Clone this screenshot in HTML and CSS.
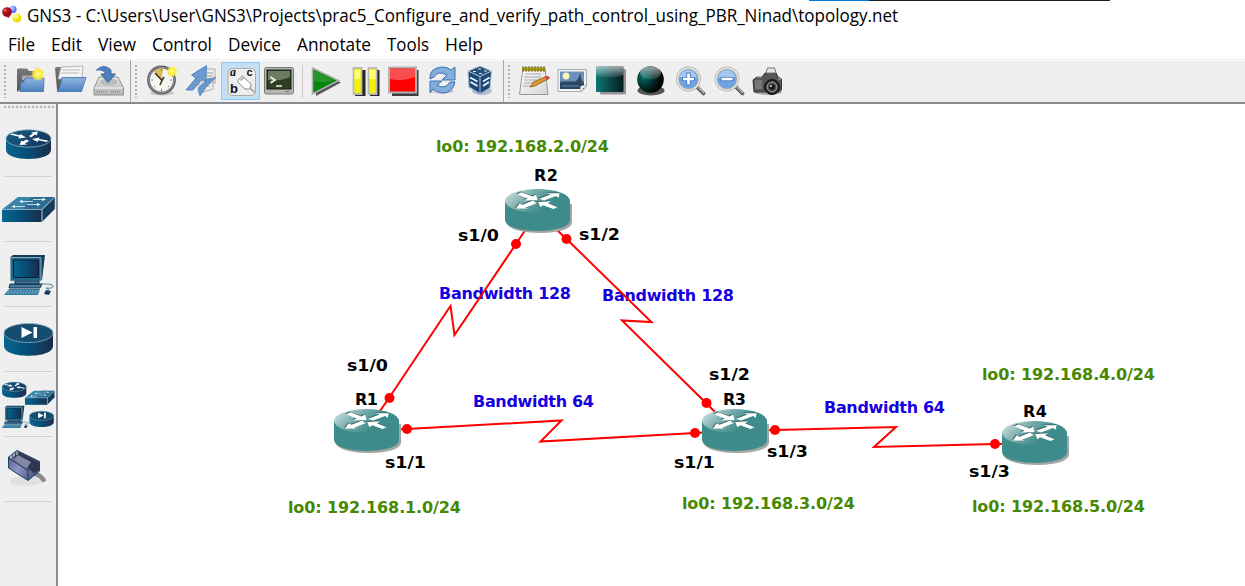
FILE: index.html
```html
<!DOCTYPE html>
<html lang="en">
<head>
<meta charset="utf-8">
<title>GNS3 - topology.net</title>
<link rel="stylesheet" href="styles.css">
</head>
<body>
<div class="window">
<header class="titlebar">
<svg class="title" width="910" height="30" viewBox="0 0 910 30">
<defs>
<radialGradient id="gr" cx=".3" cy=".3"><stop offset="0" stop-color="#e99"/><stop offset=".4" stop-color="#c11224"/><stop offset="1" stop-color="#9c0818"/></radialGradient>
<radialGradient id="gb" cx=".35" cy=".3"><stop offset="0" stop-color="#c4ccff"/><stop offset="1" stop-color="#6a78ee"/></radialGradient>
<radialGradient id="gy" cx=".35" cy=".3"><stop offset="0" stop-color="#ffffb0"/><stop offset="1" stop-color="#ecdf00"/></radialGradient>
<radialGradient id="star"><stop offset="0" stop-color="#fffdb0"/><stop offset=".45" stop-color="#fff23a"/><stop offset=".75" stop-color="#fbe94a" stop-opacity=".75"/><stop offset="1" stop-color="#fbe94a" stop-opacity="0"/></radialGradient>
<linearGradient id="blue" x2="0" y2="1"><stop offset="0" stop-color="#8eb5e0"/><stop offset="1" stop-color="#4d82be"/></linearGradient>
<linearGradient id="grey" x2="0" y2="1"><stop offset="0" stop-color="#777"/><stop offset="1" stop-color="#565656"/></linearGradient>
<linearGradient id="paper" x2="1" y2="1"><stop offset="0" stop-color="#fff"/><stop offset="1" stop-color="#d5d5d5"/></linearGradient>
<linearGradient id="drive" x2="0" y2="1"><stop offset="0" stop-color="#e6e6e6"/><stop offset="1" stop-color="#b4b4b4"/></linearGradient>
<linearGradient id="cisco"><stop offset="0" stop-color="#07658e"/><stop offset=".45" stop-color="#065079"/><stop offset="1" stop-color="#1c2c4e"/></linearGradient>
<linearGradient id="ciscotop" x2="1" y2=".3"><stop offset="0" stop-color="#145d85"/><stop offset="1" stop-color="#14395e"/></linearGradient>
<linearGradient id="nodeTop" x1="0" y1=".5" x2=".6" y2=".75"><stop offset="0" stop-color="#b2cfcf"/><stop offset=".45" stop-color="#72a9a9"/><stop offset="1" stop-color="#3d8c8b"/></linearGradient>
</defs>
<circle cx="13" cy="9.500" r="3.700" fill="url(#gb)"/><circle cx="7" cy="12" r="4.800" fill="url(#gr)"/><path d="M5 16 9 18 10 15Z" fill="#b01020"/><circle cx="17" cy="18" r="4.500" fill="url(#gy)"/>
<text x="27" y="22" textLength="871" lengthAdjust="spacingAndGlyphs">GNS3 - C:\Users\User\GNS3\Projects\prac5_Configure_and_verify_path_control_using_PBR_Ninad\topology.net</text>
</svg>
<div class="topstrip"></div>
</header>
<nav class="menu">
<svg width="43" height="30"><text x="8" y="21" textLength="27" lengthAdjust="spacingAndGlyphs">File</text></svg>
<svg width="47" height="30"><text x="8" y="21" textLength="31" lengthAdjust="spacingAndGlyphs">Edit</text></svg>
<svg width="54" height="30"><text x="8" y="21" textLength="38" lengthAdjust="spacingAndGlyphs">View</text></svg>
<svg width="76" height="30"><text x="8" y="21" textLength="60" lengthAdjust="spacingAndGlyphs">Control</text></svg>
<svg width="69" height="30"><text x="8" y="21" textLength="53" lengthAdjust="spacingAndGlyphs">Device</text></svg>
<svg width="90" height="30"><text x="8" y="21" textLength="74" lengthAdjust="spacingAndGlyphs">Annotate</text></svg>
<svg width="58" height="30"><text x="8" y="21" textLength="42" lengthAdjust="spacingAndGlyphs">Tools</text></svg>
<svg width="60" height="30"><text x="8" y="21" textLength="38" lengthAdjust="spacingAndGlyphs">Help</text></svg>
</nav>
<div class="toolbar">
<div class="group first">
<svg viewBox="12 62 39 38"><path d="M17 70q0-1.500 1.500-1.500H27l2 2.500H41.500V90H20L17 92Z" fill="url(#grey)"/><path d="M22 75.500H41V80H22Z" fill="#ababab"/><path d="M24 80 26 78H44L43.500 91.500H20L21 82H24Z" fill="url(#blue)" stroke="#3c6fae" stroke-width=".8"/><circle cx="38" cy="74" r="7" fill="url(#star)"/></svg>
<svg viewBox="51 62 39 38"><path d="M55 68.500q0-1.500 2-1.500H82V90H57Z" fill="url(#grey)"/><path d="M61 67 83 66 82 79H58Z" fill="#f4f4f4" stroke="#999" stroke-width=".7"/><path d="M62 70H80M61 73H79" stroke="#bbb"/><path d="M62 77.500H86L81.500 91.500H57Q60 88 62 77.500Z" fill="url(#blue)" stroke="#3c6fae" stroke-width=".8"/></svg>
<svg viewBox="90 62 39 38"><path d="M99 77H118L123.500 88V95H94V88Z" fill="url(#drive)" stroke="#909090"/><ellipse cx="109" cy="82" rx="9" ry="3.500" fill="#bbb"/><path d="M94.500 88H123" stroke="#f9f9f9"/><path d="M97 91.500H107M111 91.500H120" stroke="#8d8d8d" stroke-width="1.600" stroke-dasharray="1 1"/><path d="M96.500 70Q104 63 111 70V74H115.500L108 82.500 101 74H105.500Q104 69 96.500 70Z" fill="#4f82bd" stroke="#2f609c" stroke-width=".9"/></svg>
</div>
<div class="group second">
<svg viewBox="143 62 39 38"><ellipse cx="162" cy="93" rx="12" ry="2.500" fill="#c6c6c6"/><circle cx="161.500" cy="80" r="13" fill="#f5f5f0" stroke="#5d5c66" stroke-width="2.800"/><circle cx="161.500" cy="80" r="12.800" fill="none" stroke="#aaa8b3" stroke-width=".8"/><path d="M161.500 80 154 71A11.500 11.500 0 0 1 163 68.500Z" fill="#d8bd58"/><path d="M155 73 162 80.500 160 85M162 80 164 77" fill="none" stroke="#41351c" stroke-width="1.600"/><path d="M161.500 69V71M161.500 89V91M151 80H153M170 80H172M169 73l-1 1M154 87l1-1M169 87l-1-1" stroke="#777"/><circle cx="172" cy="71.500" r="5.800" fill="url(#star)"/></svg>
<svg viewBox="182 62 39 38"><g fill="#eee" stroke="#999" stroke-width=".8"><path d="M197 71H208V85H197Z"/><path d="M204 69H215V83H204Z"/><path d="M202 79H213V89L203 92Z"/></g><path d="M207 73H213M207 76H213M207 79H212M204 83H211M204 86H210" stroke="#999"/><path d="M198 88 208 79 216 77.500 207 86 200 96 198.500 92Z" fill="#6a97c8" stroke="#4779b1" stroke-width=".6"/><path d="M186 90 196 78 191.500 75 206.500 65.500 206 82 202 79.500 193 90Z" fill="#6c9ace" stroke="#3f76b7" stroke-width=".8"/></svg>
<svg class="active" viewBox="221 62 39 38"><rect x="228" y="68.500" width="27.500" height="27" rx="4.500" fill="#ededed" stroke="#aaa"/><g class="glyph"><text x="230" y="76" class="italic">a</text><text x="246.500" y="76">c</text><text x="230" y="93" class="bee">b</text></g><path d="M239 79 242.500 76 251 84V87L248.500 89H245L237.500 82Z" fill="#fff" stroke="#888"/><path d="M240.500 80.500 244 77.500M249.500 88 255 92.500" stroke="#aaa" stroke-width="1.700"/></svg>
<svg viewBox="260 62 39 38"><rect x="264.500" y="67.500" width="29" height="26.500" rx="2" fill="#b5b7b1" stroke="#777971"/><rect x="267" y="70" width="24" height="19" fill="#2e3d23" stroke="#171e12"/><path d="M268 71H290V77Q278 82 268 80Z" fill="#6b7b5e"/><path d="M270.500 77 275 80 270.500 83M276 86H282" fill="none" stroke="#edf4e8" stroke-width="1.700"/><path d="M286 91.500H289" stroke="#6b7268"/></svg>
<i class="sep"></i>
<svg viewBox="306 62 39 38"><path d="M316 71 341 82.500 316 96Z" fill="#555"/><path d="M312.500 68 338.500 80.500 312.500 94Z" fill="#07840c" stroke="#adb1ae" stroke-width="1.600"/><path d="M314 70.500 334 80Q323 84 314 81Z" fill="#45a145" opacity=".55"/></svg>
<svg viewBox="345 62 39 38"><path d="M355 70H365.500V96H355ZM370 70H379.500V96H370Z" fill="#262626"/><g fill="#f4f400" stroke="#bababa" stroke-width="1.800"><path d="M353.500 68H361.500V94H353.500ZM368.500 68H376.500V94H368.500Z"/></g><path d="M354.500 70H360.500V79H354.500ZM369.500 70H375.500V79H369.500Z" fill="#ffff72"/></svg>
<svg viewBox="384 62 39 38"><path d="M392 70H418.500V96H392Z" fill="#3e3e3e"/><rect x="389" y="67.500" width="27" height="25" fill="#ff0000" stroke="#b2b2b2" stroke-width="2"/><path d="M390 69H415V77Q403 82 390 79Z" fill="#fa4e4e"/></svg>
<svg viewBox="423 62 39 38"><ellipse cx="442" cy="91" rx="12" ry="3" fill="#d0d0d0"/><path d="M430 79Q429 68 442 67Q448 67 451 70L455 67V80H442L447 75Q438 70 434 77Z" fill="#82addc" stroke="#3b71b1"/><path d="M455 82Q453 93 442 93Q436 92 433 89L430 93V81H442L437 85Q445 90 450 82Z" fill="#82addc" stroke="#3b71b1"/></svg>
<svg viewBox="462 62 39 38"><ellipse cx="482" cy="91" rx="10" ry="4" fill="#b6bad2"/><path d="M468 71 480 66 491.500 71 490 88 480 94 469 87Z" fill="#1d4674"/><path d="M468 71 480 66 491.500 71 480 76.500Z" fill="#274d77" stroke="#c6d8e8" stroke-width=".9"/><path d="M480 76.500V94M468 71 469 87 480 94 490 88 491.500 71" fill="none" stroke="#9fbcd6" stroke-width="1.100"/><path d="M470 77.500 477.500 81.500M470.500 82 477.500 86M483 81.500 489.500 77.500M483 86 489 82" stroke="#e9f2fa" stroke-width="1.900"/><path d="M473 71.500H476M478 69H481M479 73.500H482M484 71H487" stroke="#dbe7f1" stroke-width="1.100"/></svg>
</div>
<div class="group third">
<svg viewBox="514 62 39 38"><path d="M523 68H545L548 94.500H519.500Z" fill="url(#paper)" stroke="#999"/><path d="M522 67.500H545V71H522Z" fill="#b8a51b"/><path d="M523 66V72M526 66V72M529 66V72M532 66V72M535 66V72M538 66V72M541 66V72M544 66V72" stroke="#665b14" stroke-width=".9"/><path d="M525 74H541M524 77H541M524 80H537M524 83H534M523 86H530" stroke="#aaa"/><path d="M530 87 533.500 82 546 76.500 548 79 535 86Z" fill="#d99a35" stroke="#89551b" stroke-width=".8"/><path d="M545 77 548 76 550 78 547 80Z" fill="#e03333"/></svg>
<svg viewBox="553 62 39 38"><path d="M558 69.500H586.500V86L582 91.500H558Z" fill="#f2f2f2" stroke="#ababab"/><path d="M560 71.500H584V85L580 89H560Z" fill="#6a90be"/><path d="M560 81H584V89H560Z" fill="#274769"/><path d="M560 82Q569 80 584 82M562 86H579" stroke="#6b8098" fill="none"/><circle cx="566" cy="76" r="3.500" fill="#f8f7b5"/><path d="M575 82Q579 79 580 73L582 82Z" fill="#34445c"/><path d="M580 91.500 581 86 586.500 85Z" fill="#fff" stroke="#aaa" stroke-width=".7"/></svg>
<svg viewBox="592 62 39 38"><defs><linearGradient id="teal"><stop offset="0" stop-color="#0b7772"/><stop offset="1" stop-color="#071a1d"/></linearGradient><radialGradient id="ball" cx=".25" cy=".4" r=".7"><stop offset="0" stop-color="#087069"/><stop offset=".55" stop-color="#022c29"/><stop offset="1" stop-color="#000"/></radialGradient><linearGradient id="gloss" x2="0" y2="1"><stop offset="0" stop-color="#fff" stop-opacity=".6"/><stop offset="1" stop-color="#fff" stop-opacity=".08"/></linearGradient></defs><rect x="600" y="69" width="26" height="25.500" rx="1.500" fill="#939393"/><rect x="596" y="66" width="27.500" height="26" rx="1" fill="url(#teal)"/><path d="M596 66H623.500V75Q609 80 596 75Z" fill="url(#gloss)"/></svg>
<svg viewBox="631 62 39 38"><ellipse cx="651" cy="90.500" rx="13.500" ry="5" fill="#555"/><circle cx="650.500" cy="79.500" r="13.300" fill="url(#ball)"/><ellipse cx="650.500" cy="73" rx="10.500" ry="6.500" fill="url(#gloss)"/></svg>
<svg viewBox="670 62 39 38"><path d="M697 87 703.500 93.500" stroke="#626262" stroke-width="3.800" stroke-linecap="round"/><path d="M698 87 704 93" stroke="#bbb" stroke-width="1.300"/><circle cx="688.500" cy="79" r="11" fill="#6fa3e2" stroke="#aaa" stroke-width="2.800"/><circle cx="688.500" cy="79" r="11" fill="none" stroke="#e7e7df" stroke-width="1.500"/><path d="M679.500 77A9 9 0 0 1 697 77Q688 81 679.500 77" fill="#a7c8ee"/><path d="M682 79H695M688.500 72.500V85.500" stroke="#437abd" stroke-width="4.200"/><path d="M683 79H694M688.500 73.500V84.500" stroke="#fff" stroke-width="2.600"/></svg>
<svg viewBox="709 62 39 38"><path d="M736 87 742.500 93.500" stroke="#626262" stroke-width="3.800" stroke-linecap="round"/><path d="M737 87 743 93" stroke="#bbb" stroke-width="1.300"/><circle cx="727" cy="79" r="11" fill="#6fa3e2" stroke="#aaa" stroke-width="2.800"/><circle cx="727" cy="79" r="11" fill="none" stroke="#e7e7df" stroke-width="1.500"/><path d="M718 77A9 9 0 0 1 735.500 77Q727 81 718 77" fill="#a7c8ee"/><path d="M720.500 79H733.500" stroke="#437abd" stroke-width="4.200"/><path d="M721.500 79H732.500" stroke="#fff" stroke-width="2.600"/></svg>
<svg viewBox="748 62 39 38"><ellipse cx="768" cy="92" rx="14" ry="3" fill="#aaa"/><path d="M753 80 757 77H762L765 73H776L778 77 781.500 79V90L778 92H754Z" fill="#555754" stroke="#333"/><path d="M766 73 767.500 68H774.500L776 73Z" fill="#e5e5e5" stroke="#777"/><path d="M755 80H762V89H755Z" fill="#777974"/><path d="M757 77H762M778 79H781" stroke="#bbb"/><circle cx="772" cy="87" r="7.500" fill="#242525" stroke="#111"/><circle cx="772" cy="87" r="5" fill="#4b5154" stroke="#aaa" stroke-width=".9"/><circle cx="772" cy="87" r="2.800" fill="#111"/><circle cx="771" cy="86" r="1" fill="#eee"/></svg>
</div>
</div>
<main class="workspace">
<aside class="devices">
<div class="handle"></div>
<svg viewBox="0 112 56 65"><g id="devrouter"><path d="M6 139V150C6 162 51 162 51 150V139Z" fill="url(#cisco)"/><ellipse cx="28.500" cy="138.500" rx="22.500" ry="8.700" fill="url(#ciscotop)" stroke="#91b7ca" stroke-width=".8"/><g fill="#fff"><path d="M10 134.500 19 136.800 18.500 138.500 26 137.500 20.500 134 20 135.300 12 133.500Z"/><path d="M29 136 33 133.500 31 132.500 38 131.500 36.500 135.500 35 134.500 31 137.500Z"/><path d="M19.500 145 21.500 140.500 23 141.500 26.500 139.500 29 141 25 143.500 27 144.500Z"/><path d="M47 142 38 140.300 38 142 32 139 39.500 137.500 39 139 48 140.500Z"/></g></g></svg>
<svg viewBox="0 177 56 65"><g id="devswitch"><path d="M2 209.500 18 197H55L42 209.500Z" fill="#3984a9"/><path d="M32 197H55L42 209.500H22Z" fill="#2d6d94"/><path d="M2 209.500H42V222H2Z" fill="url(#cisco)"/><path d="M42 209.500 55 197V209L42 222Z" fill="#173a5b" stroke="#9cb9cc" stroke-width=".7"/><path d="M2 209.500H42V222M42 209.500 55 197" fill="none" stroke="#9cb9cc" stroke-width=".8"/><path d="M33 199.500H43M22 201.500H33M27 204.500H38M13 206.500H25" stroke="#e9f2f6" stroke-width=".8"/><path d="M42.500 198 46 199.500 42 201ZM22.500 200 19 201.500 22.500 203ZM37 203 40.500 204.500 37 206ZM15 205 11.500 206.500 15 208Z" fill="#fff"/></g></svg>
<svg viewBox="0 242 56 65"><g id="devpc"><path d="M10 257.500 13 255H45L42 280 39 281H10Z" fill="#123b5e"/><path d="M10.500 257.500H41V281H10.500Z" fill="#216987" stroke="#a3becc" stroke-width=".8"/><path d="M13.500 260H38.500V277.500H13.500Z" fill="url(#cisco)" stroke="#06213b"/><path d="M15 281H39V284H15ZM10 284H42L40 288H9Z" fill="#477c9c" stroke="#122e4e"/><path d="M9 289 40 289 38 295H4Z" fill="#2e7aa0"/><path d="M8 291H39M7 293H38" stroke="#8fb4c8" stroke-dasharray="2 1"/><path d="M41 284H45Q53 284 53 286Q53 289 46 288L49 290" fill="none" stroke="#5c8298"/><path d="M46 290 51 291 49 295 44 294Z" fill="#183b60"/></g></svg>
<svg viewBox="0 307 56 65"><g id="devsec"><path d="M4 333V346C4 359 53 359 53 346V333Z" fill="url(#cisco)"/><ellipse cx="28.500" cy="333" rx="24.500" ry="9.500" fill="#154c70" stroke="#88adc1" stroke-width=".8"/><path d="M21.500 327 32.500 332.500 21.500 338ZM33.500 327H37V338H33.500Z" fill="#fff"/></g></svg>
<svg viewBox="0 372 56 65"><use href="#devrouter" transform="translate(-1.200 312) scale(.54)"/><use href="#devswitch" transform="translate(23.800 280.500) scale(.56)"/><use href="#devpc" transform="translate(-.5 264.800) scale(.553)"/><use href="#devsec" transform="translate(27.500 251) scale(.495)"/></svg>
<svg viewBox="0 437 56 65"><defs><linearGradient id="cable" x2="1" y2=".6"><stop offset="0" stop-color="#4a5380"/><stop offset=".5" stop-color="#8d96c4"/><stop offset="1" stop-color="#4a5282"/></linearGradient></defs><ellipse cx="26" cy="481" rx="16" ry="5" fill="#e0e0e0"/><path d="M34 473.500Q41 475 44.500 481.500" fill="none" stroke="#888" stroke-width="4.500"/><path d="M8.500 457 17 450.500 39.500 461.500V471L28 480.500 8.500 468Z" fill="url(#cable)" stroke="#164064"/><path d="M17 451 39 462V470L34 473 22 464 13 458Z" fill="#30364f"/><path d="M18 455 31 462 27 468 14 459Z" fill="#8289a8"/><path d="M9 458 28 470.500V479.500M28 470.500 33 466" fill="none" stroke="#333c68" stroke-width="1.200"/><path d="M11 455.500V458.500M14 453.500V456.500M17 451.500V455" stroke="#ddd" stroke-width="1.200"/></svg>
</aside>
<svg class="canvas" width="1187" height="482" viewBox="58 104 1187 482">
<defs><g id="node"><path d="M1.500 15V33.500C3 47.500 67 47.500 67 33.500V15Z" fill="#a5a5a5"/><path d="M0 12V31C1 45.500 65 45.500 65 31V12Z" fill="#3d8c8b"/><ellipse cx="32.500" cy="12" rx="32.500" ry="12" fill="url(#nodeTop)"/>
<g fill="#345e60" transform="translate(-.7 -.8)"><use href="#arrows"/></g><g fill="#fff"><use href="#arrows"/></g></g>
<g id="arrows"><path d="M12 5.300 16.500 3.300 27.500 7.500 31 5.500 32.500 11 19 11.500 22.500 9.500Z"/><path d="M34 9.800 45.500 5.500 41.500 4.300 54.500 4.200 53.800 8.800 51 7 39 11.500Z"/><path d="M11 19.500 14.500 14.300 17.500 15.800 28 11.500 31.500 14.300 20 18.700 23.500 19.500Z"/><path d="M33 13 46 12.300 43 14.300 52.500 18.200 48.500 20 38 16.300 35.500 18.200Z"/></g></defs>
<g class="label lan"><text x="436" y="151.500" textLength="173">lo0: 192.168.2.0/24</text><text x="288" y="512.500" textLength="173">lo0: 192.168.1.0/24</text><text x="682" y="508.500" textLength="173">lo0: 192.168.3.0/24</text><text x="982" y="379.500" textLength="173">lo0: 192.168.4.0/24</text><text x="972" y="511.500" textLength="173">lo0: 192.168.5.0/24</text></g>
<g class="label band"><text x="439" y="298.500" textLength="132">Bandwidth 128</text><text x="602" y="300.500" textLength="132">Bandwidth 128</text><text x="473" y="406.500" textLength="121">Bandwidth 64</text><text x="824" y="412.500" textLength="121">Bandwidth 64</text></g>
<g class="links"><path d="M380 411 389 398 450.500 306 454.500 335 516 244 526 229"/><path d="M556 229 566.500 239 651.500 322 622 320.500 706 403 716 413"/><path d="M367 431 407 429 561.500 420.500 540.500 441.500 695 433 735 431"/><path d="M735 431 775 430 896 427 874 447 995 444 1035 443"/></g>
<use href="#node" x="505" y="189"/><use href="#node" x="334" y="409"/><use href="#node" x="702" y="409"/><use href="#node" x="1002" y="421"/>
<g fill="#f00"><circle cx="516" cy="244" r="5"/><circle cx="566.500" cy="239" r="5"/><circle cx="389.500" cy="398" r="5"/><circle cx="407" cy="429" r="5"/><circle cx="706.500" cy="403" r="5"/><circle cx="695" cy="433" r="5"/><circle cx="775" cy="430" r="5"/><circle cx="995" cy="444" r="5"/></g>
<g class="label"><text x="534" y="181" textLength="24">R2</text><text x="355" y="405" textLength="23">R1</text><text x="723" y="405" textLength="23">R3</text><text x="1023" y="417" textLength="24">R4</text>
<text x="458" y="241" textLength="41" lengthAdjust="spacingAndGlyphs">s1/0</text><text x="579" y="240" textLength="41" lengthAdjust="spacingAndGlyphs">s1/2</text><text x="347" y="371" textLength="41" lengthAdjust="spacingAndGlyphs">s1/0</text><text x="385" y="468" textLength="41" lengthAdjust="spacingAndGlyphs">s1/1</text><text x="709" y="380" textLength="41" lengthAdjust="spacingAndGlyphs">s1/2</text><text x="674" y="468" textLength="41" lengthAdjust="spacingAndGlyphs">s1/1</text><text x="767" y="457" textLength="41" lengthAdjust="spacingAndGlyphs">s1/3</text><text x="969" y="477" textLength="41" lengthAdjust="spacingAndGlyphs">s1/3</text></g>
</svg>
</main>
</div>
</body>
</html>
```

FILE: styles.css
```css
* { box-sizing: border-box; }
body { margin: 0; background: #fff; overflow: hidden; }
svg { display: block; flex: none; overflow: visible; }
.window { width: 1245px; height: 586px; display: flex; flex-direction: column; }
.titlebar { height: 30px; flex: none; position: relative; }
.title, .menu { font: 17.5px "Open Sans", "Noto Sans", sans-serif; fill: #000; }
.topstrip { position: absolute; left: 809px; top: 0; width: 301px; height: 1px; background: linear-gradient(to right, #0078d7 60px, #1d1d1d 60px); }
.menu { height: 29px; flex: none; display: flex; }
.toolbar { height: 45px; flex: none; display: flex; background: #efefef; border-top: 1px solid #f0f0f0; border-bottom: 2px solid #898b91; box-shadow: inset 0 1px #fbfbfb; }
.group { display: flex; align-items: center; border-right: 1px solid #a9a9a9; }
.group::before { content: ""; width: 2px; height: 33px; margin-left: 4px; background: repeating-linear-gradient(#b2b2b2 0 2px, transparent 2px 4px); }
.group svg { width: 39px; height: 38px; }
.first { width: 131px; }
.first::before { margin-right: 6px; }
.second { width: 373px; }
.second::before { margin-right: 6px; }
.third { border-right: 0; }
.third::before { margin-right: 4px; }
.group .active { background: #c2dff5; outline: 1px solid #90c8f6; outline-offset: -1px; }
.sep { width: 1px; height: 33px; margin: 0 3px; background: #c9c9c9; }
.glyph { font: bold 11px "Liberation Sans", sans-serif; fill: #111; }
.italic { font: italic bold 12px "Liberation Serif", serif; }
.bee { font-size: 13px; }
.workspace { flex: 1; display: flex; min-height: 0; }
.devices { width: 58px; flex: none; background: #efefef; border-right: 2px solid #8c8c94; display: flex; flex-direction: column; overflow: hidden; }
.handle { height: 8px; padding-top: 2px; }
.handle::before { content: ""; display: block; width: 50px; height: 2px; margin-left: 4px; background: repeating-linear-gradient(to right, #b2b2b2 0 2px, transparent 2px 4px); }
.devices svg { width: 56px; height: 65px; background: linear-gradient(#cfcfcf, #cfcfcf) 5px 64px / 47px 1px no-repeat; }
.label { font: bold 16px "DejaVu Sans", sans-serif; fill: #000; }
.lan { fill: #478800; }
.band { fill: #1600e0; }
.links path { fill: none; stroke: #f00; stroke-width: 2; stroke-linejoin: miter; }
```
